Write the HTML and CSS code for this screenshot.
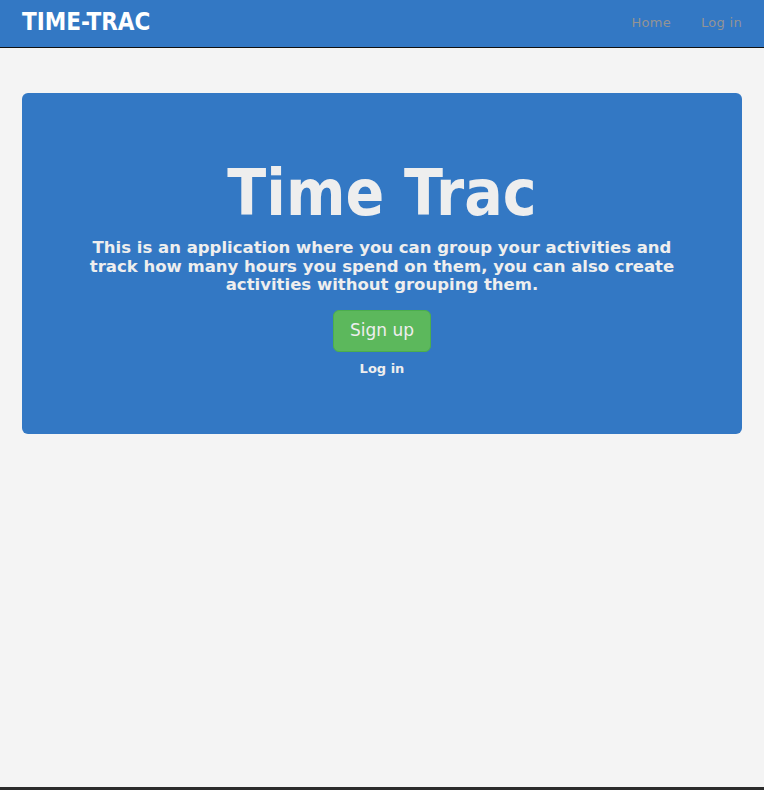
FILE: index.html
```html
<!DOCTYPE html>
<html lang="en">
<head>
<meta charset="utf-8">
<title>Time Trac</title>
<link rel="stylesheet" href="styles.css">
</head>
<body>
<div class="page">
  <header class="navbar">
    <a class="brand" href="#">TIME-TRAC</a>
    <nav class="nav">
      <a href="#">Home</a>
      <a href="#">Log in</a>
    </nav>
  </header>
  <main class="main">
    <section class="jumbotron">
      <h1 class="title">Time Trac</h1>
      <p class="lead">This is an application where you can group your activities and track how many hours you spend on them, you can also create activities without grouping them.</p>
      <a class="btn-signup" href="#">Sign up</a>
      <a class="login-link" href="#">Log in</a>
    </section>
  </main>
  <footer class="footer"></footer>
</div>
</body>
</html>
```
FILE: styles.css
```css
* { box-sizing: border-box; }
html, body { margin: 0; padding: 0; }
body {
  background: #f4f4f4;
  font-family: "DejaVu Sans", sans-serif;
  color: #333;
}
a { text-decoration: none; }
.page {
  min-height: 100vh;
  display: flex;
  flex-direction: column;
}
.navbar {
  height: 48px;
  background: #3378c4;
  border-bottom: 1px solid #111;
  display: flex;
  align-items: center;
  justify-content: space-between;
  padding: 0 22px;
}
.brand {
  font-family: "DejaVu Sans Condensed", "DejaVu Sans", sans-serif;
  font-weight: bold;
  font-size: 24px;
  color: #fff;
  margin-top: -3px;
}
.nav {
  display: flex;
  gap: 30px;
}
.nav a {
  font-size: 13px;
  color: #949494;
  letter-spacing: 0.3px;
  margin-top: -2px;
}
.main {
  flex: 1;
  padding: 45px 22px 0;
}
.jumbotron {
  background: #3378c4;
  border-radius: 6px;
  height: 341px;
  display: flex;
  flex-direction: column;
  align-items: center;
  padding: 58px 40px 0;
  color: #eee;
  text-align: center;
}
.title {
  margin: 0;
  font-family: "DejaVu Sans Condensed", "DejaVu Sans", sans-serif;
  font-size: 63.5px;
  font-weight: bold;
  line-height: 84px;
  color: #eee;
}
.lead {
  margin: 4px 0 0;
  max-width: 590px;
  font-size: 16.5px;
  font-weight: bold;
  line-height: 18.5px;
  color: #eee;
}
.btn-signup {
  margin-top: 15px;
  background: #5cb85c;
  color: #eee;
  font-size: 17px;
  line-height: 21px;
  padding: 9px 16px 10px;
  border-radius: 6px;
  border: 1px solid #4cae4c;
}
.login-link {
  margin-top: 9px;
  font-size: 13px;
  font-weight: bold;
  color: #eee;
}
.footer {
  height: 3px;
  background: #2b2b2b;
}
```
